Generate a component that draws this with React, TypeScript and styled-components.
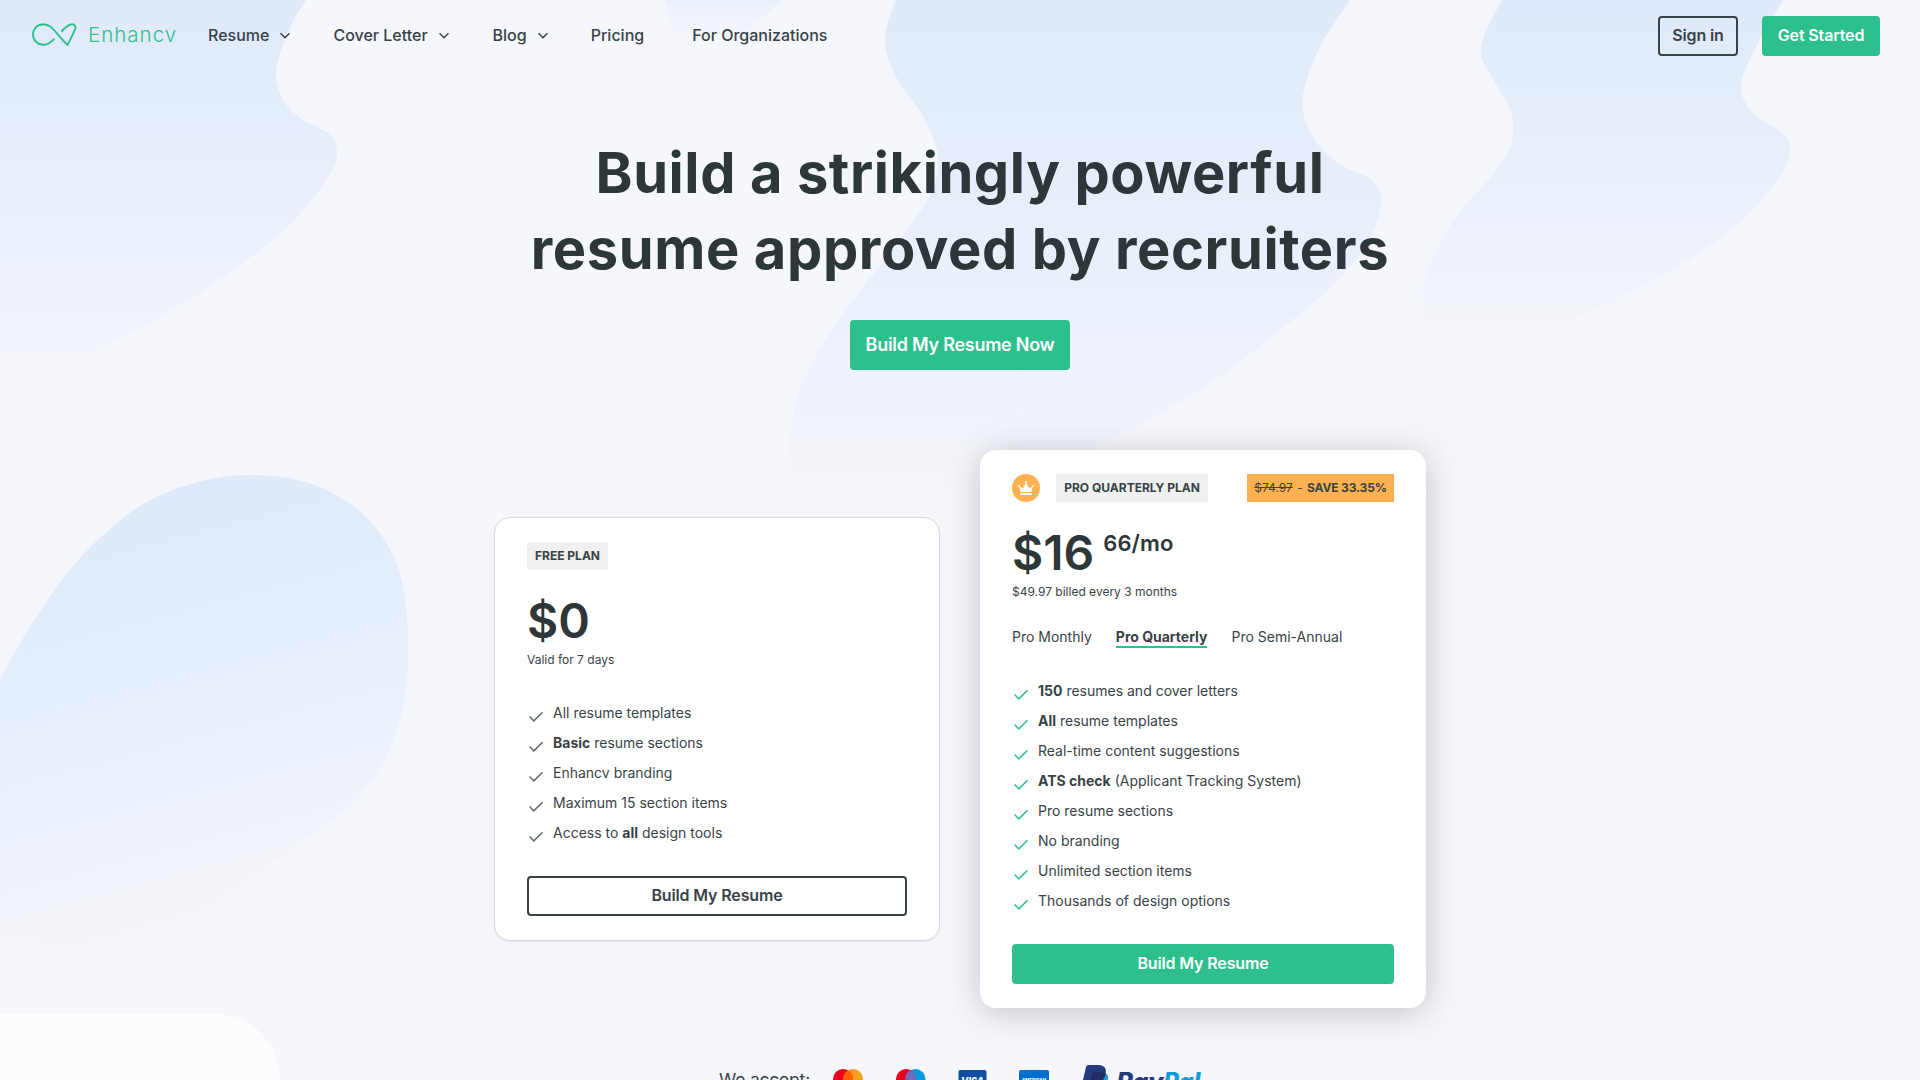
import React from "react";
import styled, { createGlobalStyle, css } from "styled-components";

const c = {
  bg: "#f6f7fc",
  green: "#2dc08d",
  ink: "#384347",
  dark: "#2d3639",
  orange: "#ffb152",
};

const GlobalStyle = createGlobalStyle`
  * { box-sizing: border-box; }
  html, body { margin: 0; padding: 0; }
  body { background: ${c.bg}; color: ${c.ink}; font-family: Inter, "Liberation Sans", sans-serif; overflow: hidden; }
  h1, p, ul { margin: 0; padding: 0; }
  a { color: inherit; text-decoration: none; }
`;

const Page = styled.div`
  position: relative;
  width: 100%;
  height: 1080px;
  overflow: hidden;
  background: ${c.bg};
`;

const Backdrop = styled.svg`
  position: absolute;
  top: 0;
  left: 0;
  display: block;
`;

const Content = styled.div`
  position: relative;
`;

const Header = styled.header`
  display: flex;
  align-items: center;
  height: 72px;
  padding: 0 40px 0 32px;
`;

const Logo = styled.a`
  display: flex;
  align-items: center;
  width: 176px;
  padding-bottom: 3px;
  color: ${c.green};
`;

const Wordmark = styled.span`
  margin: 0 0 0 11px;
  font-size: 20.5px;
  line-height: 24px;
  font-weight: 300;
  letter-spacing: 1px;
`;

const Nav = styled.nav`
  display: flex;
  align-items: center;
  flex: 1;
  padding-bottom: 2px;
`;

const NavItem = styled.a<{ $gap: number }>`
  display: flex;
  align-items: center;
  gap: 8px;
  margin-right: ${(p) => p.$gap}px;
  font-size: 16px;
  line-height: 24px;
  font-weight: 500;
  white-space: nowrap;
`;

const Button = styled.button<{ $outline?: boolean; $large?: boolean; $width?: string }>`
  display: flex;
  align-items: center;
  justify-content: center;
  width: ${(p) => p.$width ?? "auto"};
  height: ${(p) => (p.$large ? 50 : 40)}px;
  padding: 0 0 ${(p) => (p.$large ? 0 : 2)}px;
  border: 2px solid ${(p) => (p.$outline ? c.ink : c.green)};
  border-radius: 4px;
  background: ${(p) => (p.$outline ? "transparent" : c.green)};
  color: ${(p) => (p.$outline ? c.ink : "#fff")};
  font: 600 ${(p) => (p.$large ? 18 : 16)}px/1 Inter, sans-serif;
  letter-spacing: ${(p) => (p.$large ? -0.26 : -0.14)}px;
  white-space: nowrap;
`;

const Actions = styled.div`
  display: flex;
  gap: 24px;
`;

const Hero = styled.section`
  display: flex;
  flex-direction: column;
  align-items: center;
  padding-top: 63px;
`;

const Title = styled.h1`
  display: flex;
  flex-direction: column;
  align-items: center;
  margin-bottom: 33px;
  color: ${c.dark};
  font-size: 56px;
  line-height: 76px;
  font-weight: 650;
  white-space: nowrap;
`;

const TitleLine = styled.span<{ $spacing: number }>`
  letter-spacing: ${(p) => p.$spacing}px;
`;

const Plans = styled.section`
  display: flex;
  justify-content: center;
  align-items: center;
  gap: 40px;
  padding-top: 80px;
`;

const Card = styled.article<{ $featured?: boolean }>`
  width: 446px;
  border-radius: 16px;
  background: #fff;
  padding: 24px 32px;
  ${(p) =>
    p.$featured
      ? css`
          box-shadow: 0 4px 32px rgba(45, 45, 55, 0.26);
        `
      : css`
          border: 1px solid #d9dadc;
          box-shadow: 0 1px 2px rgba(56, 67, 71, 0.1);
        `}
`;

const BadgeRow = styled.div`
  display: flex;
  align-items: center;
  height: 28px;
`;

const Badge = styled.span<{ $sale?: boolean; $width: number }>`
  display: flex;
  align-items: center;
  justify-content: center;
  width: ${(p) => p.$width}px;
  height: 28px;
  padding-bottom: 2px;
  margin-left: ${(p) => (p.$sale ? "auto" : "0")};
  background: ${(p) => (p.$sale ? c.orange : "#f0f0f0")};
  font-size: 12px;
  font-weight: ${(p) => (p.$sale ? 400 : 700)};
  white-space: pre;
  b { font-weight: 700; letter-spacing: -0.15px; }
`;

const Dash = styled.span`
  margin: 0 1px;
`;

const Crown = styled.span`
  display: flex;
  width: 28px;
  height: 28px;
  margin-right: 16px;
`;

const Price = styled.div`
  display: flex;
  align-items: flex-start;
  height: 60px;
  margin-top: 21px;
  color: ${c.dark};
  font-size: 48px;
  line-height: 60px;
  font-weight: 600;
`;

const Cents = styled.span`
  margin-left: 9px;
  font-size: 22px;
  line-height: 40px;
  font-weight: 600;
  letter-spacing: 0.1px;
`;

const Note = styled.p`
  font-size: 12px;
  line-height: 18px;
`;

const Tabs = styled.div`
  display: flex;
  gap: 24px;
  height: 22px;
  margin-top: 26px;
`;

const Tab = styled.a<{ $active?: boolean }>`
  height: 21px;
  font-size: 14px;
  line-height: 20px;
  font-weight: ${(p) => (p.$active ? 700 : 400)};
  box-shadow: ${(p) => (p.$active ? `inset 0 -2px 0 ${c.green}` : "none")};
`;

const Features = styled.ul<{ $top: number }>`
  display: flex;
  flex-direction: column;
  margin: ${(p) => p.$top}px 0 28px;
  list-style: none;
`;

const Feature = styled.li<{ $accent?: boolean }>`
  display: flex;
  align-items: center;
  height: 30px;
  font-size: 14px;
  line-height: 20px;
  white-space: pre;
  b { font-weight: 700; }
  svg {
    margin: 8px 8px 0 0;
    color: ${(p) => (p.$accent ? c.green : "#5f686c")};
  }
`;

const Payments = styled.section`
  display: flex;
  align-items: flex-start;
  justify-content: center;
  padding: 57px 0 0 2px;
`;

const Accept = styled.span`
  width: 114px;
  padding-top: 3px;
  font-size: 17.5px;
  line-height: 24px;
  letter-spacing: -0.2px;
`;

type Pt = [number, number];

/** Builds a smooth curve through every point (Catmull-Rom to Bézier). */
const curve = (pts: Pt[]) => {
  let d = `M${pts[0].join(" ")}`;
  for (let i = 0; i < pts.length - 1; i++) {
    const a = pts[i - 1] ?? pts[i];
    const b = pts[i];
    const e = pts[i + 1];
    const f = pts[i + 2] ?? e;
    d += `C${b[0] + (e[0] - a[0]) / 6} ${b[1] + (e[1] - a[1]) / 6} ${e[0] - (f[0] - b[0]) / 6} ${e[1] - (f[1] - b[1]) / 6} ${e[0]} ${e[1]}`;
  }
  return d + "Z";
};

const blobs: { fill: string; pts: Pt[] }[] = [
  { fill: "url(#fadeA)", pts: [[-40, -40], [150, -60], [325, -30], [306, 0], [289, 30], [276, 72], [285, 103], [305, 121], [323, 130], [333, 138], [337, 151], [333, 168], [312, 200], [269, 243], [184, 303], [92, 351], [0, 388], [-60, 410]] },
  { fill: "url(#fadeS)", pts: [[662, -30], [665, 0], [673, 26], [688, 40], [710, 44], [741, 34], [781, 0], [800, -30]] },
  { fill: "url(#fadeB)", pts: [[920, -40], [896, 0], [885, 41], [897, 79], [924, 118], [938, 157], [931, 193], [902, 237], [862, 289], [829, 335], [800, 390], [790, 441], [796, 482], [830, 520], [900, 530], [1000, 498], [1092, 449], [1190, 396], [1266, 341], [1335, 283], [1370, 238], [1381, 203], [1378, 188], [1367, 177], [1343, 166], [1321, 148], [1305, 120], [1304, 90], [1321, 45], [1350, 0], [1375, -40]] },
  { fill: "url(#fadeC)", pts: [[1525, -30], [1502, 0], [1481, 48], [1493, 79], [1511, 112], [1511, 145], [1493, 174], [1456, 217], [1430, 265], [1422, 296], [1430, 327], [1465, 345], [1520, 338], [1578, 317], [1664, 275], [1738, 224], [1780, 176], [1790, 149], [1780, 131], [1754, 114], [1741, 86], [1757, 45], [1783, 0], [1800, -30]] },
  { fill: "url(#fadeD)", pts: [[-50, 760], [0, 678], [37, 616], [80, 558], [137, 508], [194, 483], [254, 475], [315, 485], [367, 518], [398, 568], [408, 637], [401, 716], [367, 788], [306, 838], [214, 902], [150, 936], [100, 947], [50, 944], [0, 933], [-50, 920]] },
];

const Background = () => (
  <Backdrop width="1920" height="1080" viewBox="0 0 1920 1080" fill="none">
    <defs>
      <linearGradient id="fadeA" gradientUnits="userSpaceOnUse" x1="0" y1="0" x2="0" y2="395">
        <stop stopColor="#e0e9fa" /><stop offset=".25" stopColor="#e3edfa" /><stop offset=".32" stopColor="#e5edfa" /><stop offset=".85" stopColor="#f1f5fd" /><stop offset=".9" stopColor="#f4f6fb" /><stop offset="1" stopColor={c.bg} />
      </linearGradient>
      <linearGradient id="fadeS" gradientUnits="userSpaceOnUse" x1="0" y1="0" x2="0" y2="42">
        <stop stopColor="#ebf1fb" /><stop offset="1" stopColor={c.bg} />
      </linearGradient>
      <linearGradient id="fadeB" gradientUnits="userSpaceOnUse" x1="0" y1="0" x2="0" y2="490">
        <stop stopColor="#dfeafa" /><stop offset=".22" stopColor="#e3edfa" /><stop offset=".3" stopColor="#e5edfa" /><stop offset=".86" stopColor="#f0f4fd" /><stop offset=".92" stopColor="#f4f5fa" /><stop offset="1" stopColor={c.bg} />
      </linearGradient>
      <linearGradient id="fadeC" gradientUnits="userSpaceOnUse" x1="0" y1="0" x2="0" y2="335">
        <stop stopColor="#dfe8fa" /><stop offset=".22" stopColor="#e2edfa" /><stop offset=".34" stopColor="#e6edf9" /><stop offset=".88" stopColor="#f1f5fd" /><stop offset=".93" stopColor="#f4f5fa" /><stop offset="1" stopColor={c.bg} />
      </linearGradient>
      <linearGradient id="fadeD" gradientUnits="userSpaceOnUse" x1="120" y1="480" x2="240" y2="930">
        <stop stopColor="#dde8fa" /><stop offset=".35" stopColor="#e3edfb" /><stop offset=".8" stopColor="#f0f4fc" /><stop offset=".88" stopColor="#f4f5fa" /><stop offset="1" stopColor={c.bg} />
      </linearGradient>
    </defs>
    {blobs.map((b) => (
      <path key={b.fill} d={curve(b.pts)} fill={b.fill} />
    ))}
    <path d="M0 1014H214C250 1014 280 1040 280 1084H0Z" fill="#fbfcfe" />
  </Backdrop>
);

const LogoMark = () => (
  <svg width="45" height="24" viewBox="0 0 45 24" fill="none" stroke="currentColor" strokeWidth="1.9" strokeLinejoin="round">
    <path d="M22.3 15.8C18.5 19.3 16.6 21.8 11.5 21.8C5.5 21.8 1 17.3 1 11.6C1 5.600 5.500 1.200 11.500 1.200C20.500 1.200 24 11.500 35.600 22C37.500 17.500 43.500 7 43.500 4.500C43.500 2.500 42 1.200 40 1.200C36 1.200 32.500 5.500 29.400 8.500" />
  </svg>
);

const Chevron = () => (
  <svg width="16" height="16" viewBox="0 0 16 16" fill="none" stroke="currentColor" strokeWidth="1.5">
    <path d="M3.500 6.200L8 10.700L12.500 6.200" />
  </svg>
);

const Check = () => (
  <svg width="18" height="16" viewBox="0 0 18 16" fill="none" stroke="currentColor" strokeWidth="1.5">
    <path d="M2.600 7.600L6.800 11.900L15.600 3.200" />
  </svg>
);

const CrownIcon = () => (
  <svg width="28" height="28" viewBox="0 0 28 28">
    <circle cx="14" cy="14" r="14" fill={c.orange} />
    <path d="M8.700 18L7.100 12.300L10.900 14.200L14 8.500L17.100 14.200L20.900 12.300L19.300 18Z" fill="#fff" />
    <g fill="#fff">
      <circle cx="14" cy="8.300" r="1.100" /><circle cx="6.900" cy="12" r="1.050" /><circle cx="21.100" cy="12" r="1.050" />
      <rect x="8.300" y="19" width="11.400" height="2" rx=".5" />
    </g>
  </svg>
);

const PaymentLogos = () => (
  <svg width="370" height="34" viewBox="0 0 370 34">
    <g>
      <circle cx="20" cy="14" r="10" fill="#f79e1b" />
      <circle cx="10" cy="14" r="10" fill="#eb001b" />
      <path d="M15 5.340A10 10 0 0 1 15 22.660A10 10 0 0 1 15 5.340Z" fill="#ff5f00" />
    </g>
    <g>
      <circle cx="82.500" cy="14" r="10" fill="#0099df" />
      <circle cx="73" cy="14" r="10" fill="#eb001b" />
      <path d="M77.700 5.100A10 10 0 0 1 77.700 22.900A10 10 0 0 1 77.700 5.100Z" fill="#6c6bbd" />
    </g>
    <rect x="125.500" y="5" width="28" height="20" rx="2" fill="#0e4fa1" />
    <text x="139.500" y="19.500" textAnchor="middle" fill="#fff" fontFamily="Inter" fontStyle="italic" fontWeight="800" fontSize="10.500" textLength="23" lengthAdjust="spacingAndGlyphs">VISA</text>
    <rect x="186" y="5" width="30" height="20" rx="2" fill="#006fcf" />
    <text x="201" y="17.500" textAnchor="middle" fill="#fff" fontFamily="Inter" fontWeight="800" fontSize="6" textLength="24" lengthAdjust="spacingAndGlyphs">AMERICAN</text>
    <text x="201" y="23" textAnchor="middle" fill="#fff" fontFamily="Inter" fontWeight="800" fontSize="6" textLength="24" lengthAdjust="spacingAndGlyphs">EXPRESS</text>
    <g transform="translate(1.500 0)">
      <path d="M258 8Q275 5 273.500 14Q271 24 261 24H256L254 32H248Z" fill="#179bd7" />
      <path d="M254.500 0H265Q273 1 271 9Q269 19 259 19H254L252 28H245.500L251.500 2Q252 0 254.500 0Z" fill="#253b80" />
      <path d="M258 7Q266 6 271 8.500Q269 19 259 19H255Z" fill="#222d65" />
    </g>
    <text x="283.500" y="24.500" fill="#253b80" fontFamily="Inter" fontStyle="italic" fontWeight="800" fontSize="24" textLength="47" lengthAdjust="spacingAndGlyphs">Pay</text>
    <text x="330.500" y="24.500" fill="#179bd7" fontFamily="Inter" fontStyle="italic" fontWeight="800" fontSize="24" textLength="37" lengthAdjust="spacingAndGlyphs">Pal</text>
  </svg>
);

const nav = [
  { label: "Resume", menu: true, gap: 40 },
  { label: "Cover Letter", menu: true, gap: 41 },
  { label: "Blog", menu: true, gap: 40 },
  { label: "Pricing", menu: false, gap: 48 },
  { label: "For Organizations", menu: false, gap: 0 },
];

const freeFeatures: React.ReactNode[] = [
  "All resume templates",
  <><b>Basic</b> resume sections</>,
  "Enhancv branding",
  "Maximum 15 section items",
  <>Access to <b>all</b> design tools</>,
];

const proFeatures: React.ReactNode[] = [
  <><b>150</b> resumes and cover letters</>,
  <><b>All</b> resume templates</>,
  "Real-time content suggestions",
  <><b>ATS check</b> (Applicant Tracking System)</>,
  "Pro resume sections",
  "No branding",
  "Unlimited section items",
  "Thousands of design options",
];

const FeatureList = ({ items, accent, top }: { items: React.ReactNode[]; accent?: boolean; top: number }) => (
  <Features $top={top}>
    {items.map((item, i) => (
      <Feature key={i} $accent={accent}><Check /><span>{item}</span></Feature>
    ))}
  </Features>
);

export default function App() {
  return (
    <Page>
      <GlobalStyle />
      <Background />
      <Content>
        <Header>
          <Logo href="#"><LogoMark /><Wordmark>Enhancv</Wordmark></Logo>
          <Nav>
            {nav.map((n) => (
              <NavItem key={n.label} href="#" $gap={n.gap}>{n.label}{n.menu && <Chevron />}</NavItem>
            ))}
          </Nav>
          <Actions>
            <Button $outline $width="80px">Sign in</Button>
            <Button $width="118px">Get Started</Button>
          </Actions>
        </Header>
        <Hero>
          <Title>
            <TitleLine $spacing={0.6}>Build a strikingly powerful</TitleLine>
            <TitleLine $spacing={0.62}>resume approved by recruiters</TitleLine>
          </Title>
          <Button $large $width="220px">Build My Resume Now</Button>
        </Hero>
        <Plans>
          <Card>
            <BadgeRow><Badge $width={81}>FREE PLAN</Badge></BadgeRow>
            <Price>$0</Price>
            <Note>Valid for 7 days</Note>
            <FeatureList items={freeFeatures} top={29} />
            <Button $outline $width="100%">Build My Resume</Button>
          </Card>
          <Card $featured>
            <BadgeRow>
              <Crown><CrownIcon /></Crown>
              <Badge $width={152}>PRO QUARTERLY PLAN</Badge>
              <Badge $sale $width={147}><s>$74.97</s><Dash> - </Dash><b>SAVE 33.35%</b></Badge>
            </BadgeRow>
            <Price>$16<Cents>66/mo</Cents></Price>
            <Note>$49.97 billed every 3 months</Note>
            <Tabs>
              <Tab href="#">Pro Monthly</Tab>
              <Tab href="#" $active>Pro Quarterly</Tab>
              <Tab href="#">Pro Semi-Annual</Tab>
            </Tabs>
            <FeatureList items={proFeatures} accent top={27} />
            <Button $width="100%">Build My Resume</Button>
          </Card>
        </Plans>
        <Payments>
          <Accept>We accept:</Accept>
          <PaymentLogos />
        </Payments>
      </Content>
    </Page>
  );
}
